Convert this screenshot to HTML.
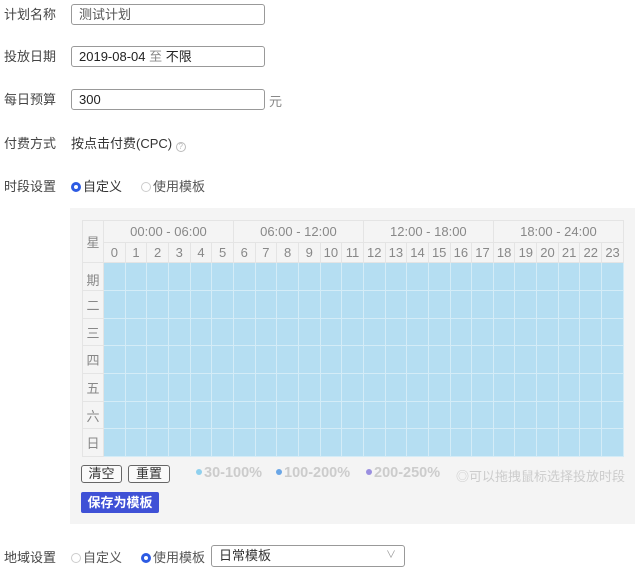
<!DOCTYPE html>
<html><head><meta charset="utf-8"><style>
*{margin:0;padding:0;box-sizing:border-box}
body{width:635px;height:576px;background:#fff;font-family:"Liberation Sans","Noto Sans CJK SC",sans-serif;font-size:13px;color:#333;position:relative;overflow:hidden}
.a{position:absolute;white-space:nowrap}
.lbl{left:4px;color:#444}
.inp{position:absolute;left:71px;width:194px;height:21px;border:1px solid #999;border-radius:3px;padding-left:7px;line-height:19px;color:#222}
.radio{display:inline-block;width:10px;height:10px;border-radius:50%;border:1px solid #ccc;vertical-align:-1px;margin-right:2px}
.radio.on{border:3px solid #2d5be3}
.panel{position:absolute;left:70px;top:208px;width:565px;height:316px;background:#f4f4f4}
table{position:absolute;left:82px;top:220px;border-collapse:collapse;table-layout:fixed;width:542px}
td{border:1px solid #e4e4e4;text-align:center;color:#888;font-size:13px;padding:0}
td.c{background:#b5def2;border-color:#d4ecf7}
.btn{position:absolute;top:465px;height:18px;border:1px solid #666;border-radius:3px;background:#fafafa;font-size:13px;line-height:15px;text-align:center;color:#333}
.leg{position:absolute;top:465px;font-weight:bold;color:#ccc;font-size:14.5px}
.dot{display:inline-block;width:6px;height:6px;border-radius:50%;margin-right:2px;vertical-align:2px}
</style></head><body>
<div class="a lbl" style="top:4px">计划名称</div>
<div class="inp" style="top:4px;color:#555">测试计划</div>
<div class="a lbl" style="top:46px">投放日期</div>
<div class="inp" style="top:46px">2019-08-04 <span style="color:#888">至</span> 不限</div>
<div class="a lbl" style="top:89px">每日预算</div>
<div class="inp" style="top:89px">300</div>
<div class="a" style="left:269px;top:91px;color:#888">元</div>
<div class="a lbl" style="top:133px">付费方式</div>
<div class="a" style="left:71px;top:133px">按点击付费(CPC) <span style="display:inline-block;width:10px;height:10px;border:1px solid #bbb;border-radius:50%;font-size:8px;line-height:8px;text-align:center;color:#bbb;vertical-align:-1px">?</span></div>
<div class="a lbl" style="top:176px">时段设置</div>
<div class="a" style="left:71px;top:176px"><span class="radio on"></span>自定义</div>
<div class="a" style="left:141px;top:176px;color:#555"><span class="radio"></span>使用模板</div>
<div class="panel"></div>
<table>
<colgroup><col style="width:21px"><col span="24"></colgroup>
<tr style="height:22px"><td rowspan="2">星</td><td colspan="6">00:00 - 06:00</td><td colspan="6">06:00 - 12:00</td><td colspan="6">12:00 - 18:00</td><td colspan="6">18:00 - 24:00</td></tr>
<tr style="height:20px"><td>0</td><td>1</td><td>2</td><td>3</td><td>4</td><td>5</td><td>6</td><td>7</td><td>8</td><td>9</td><td>10</td><td>11</td><td>12</td><td>13</td><td>14</td><td>15</td><td>16</td><td>17</td><td>18</td><td>19</td><td>20</td><td>21</td><td>22</td><td>23</td></tr>
<tbody id="b"></tbody>
</table>
<script>
var d=['期','二','三','四','五','六','日'],h='';
for(var i=0;i<7;i++){h+='<tr style="height:'+(i==0?28:27.7)+'px"><td'+(i==0?' style="vertical-align:bottom;padding-bottom:1px"':'')+'>'+d[i]+'</td>';for(var j=0;j<24;j++)h+='<td class="c"></td>';h+='</tr>';}
document.getElementById('b').innerHTML=h;
</script>
<div class="btn" style="left:81px;width:41px">清空</div>
<div class="btn" style="left:128px;width:42px">重置</div>
<div class="leg" style="left:196px"><span class="dot" style="background:#8fd0ee"></span>30-100%</div>
<div class="leg" style="left:276px"><span class="dot" style="background:#6aa6e6"></span>100-200%</div>
<div class="leg" style="left:366px"><span class="dot" style="background:#9a8fe0"></span>200-250%</div>
<div class="a" style="left:456px;top:466px;color:#ccc;font-size:13px">◎可以拖拽鼠标选择投放时段</div>
<div class="a" style="left:81px;top:492px;width:78px;height:21px;background:#3f51d6;color:#fff;border-radius:2px;text-align:center;line-height:21px;font-weight:bold">保存为模板</div>
<div class="a lbl" style="top:547px">地域设置</div>
<div class="a" style="left:71px;top:547px;color:#555"><span class="radio"></span>自定义</div>
<div class="a" style="left:141px;top:547px;color:#555"><span class="radio on"></span>使用模板</div>
<div class="a" style="left:211px;top:545px;width:194px;height:22px;border:1px solid #999;border-radius:3px;padding-left:7px;line-height:20px">日常模板<span style="position:absolute;right:8px;top:0;color:#999;font-size:10px">∨</span></div>
</body></html>
